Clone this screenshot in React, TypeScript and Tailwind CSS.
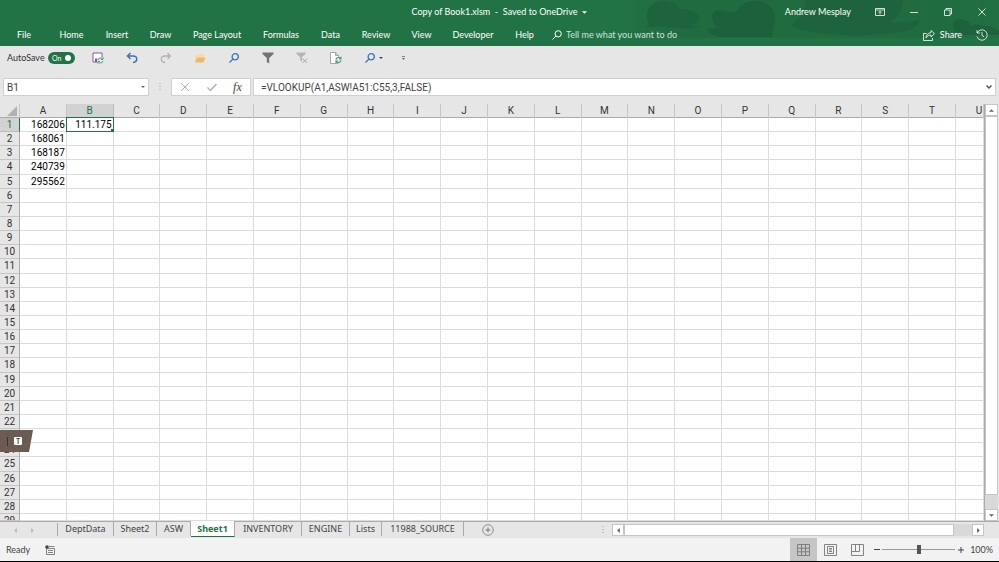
import React, { useState } from 'react';

const RIBBON_TABS = [
  { name: 'File', width: 'w-[48px]' },
  { name: 'Home', width: 'w-[47px]' },
  { name: 'Insert', width: 'w-[44px]' },
  { name: 'Draw', width: 'w-[43px]' },
  { name: 'Page Layout', width: 'w-[70px]' },
  { name: 'Formulas', width: 'w-[58px]' },
  { name: 'Data', width: 'w-[41px]' },
  { name: 'Review', width: 'w-[50px]' },
  { name: 'View', width: 'w-[41px]' },
  { name: 'Developer', width: 'w-[62px]' },
  { name: 'Help', width: 'w-[41px]' },
];

const SHEETS = [
  { name: 'DeptData', width: 'w-[56px]' },
  { name: 'Sheet2', width: 'w-[43px]' },
  { name: 'ASW', width: 'w-[34px]' },
  { name: 'Sheet1', width: 'w-[44px]' },
  { name: 'INVENTORY', width: 'w-[67px]' },
  { name: 'ENGINE', width: 'w-[48px]' },
  { name: 'Lists', width: 'w-[32px]' },
  { name: '11988_SOURCE', width: 'w-[82px]' },
];

const COLUMNS = 'ABCDEFGHIJKLMNOPQRSTU'.split('');
const ROWS = Array.from({ length: 29 }, (_, i) => i + 1);

const CELLS: Record<string, string> = {
  A1: '168206',
  B1: '111.175',
  A2: '168061',
  A3: '168187',
  A4: '240739',
  A5: '295562',
};

const ROW_GRID = 'grid grid-cols-[20px_repeat(20,minmax(0,5fr))_minmax(0,3fr)]';

function Triangle({ className, points }: { className: string; points: string }) {
  return (
    <svg viewBox="0 0 8 8" className={className} fill="currentColor" aria-hidden="true">
      <polygon points={points} />
    </svg>
  );
}

const DOWN = '0,2 8,2 4,6';
const UP = '0,6 8,6 4,2';
const LEFT = '6,0 6,8 2,4';
const RIGHT = '2,0 2,8 6,4';

function SearchIcon({ className }: { className: string }) {
  return (
    <svg viewBox="0 0 10 10" className={className} fill="none" stroke="currentColor" aria-hidden="true">
      <circle cx="6.2" cy="3.8" r="3.1" />
      <path d="M4 6 .5 9.500" />
    </svg>
  );
}

function HeaderArt() {
  return (
    <svg
      viewBox="0 0 380 38"
      className="absolute top-0 right-0 h-[38px] w-[380px]"
      fill="#1d613c"
      aria-hidden="true"
    >
      <linearGradient id="fade">
        <stop offset="0" stopColor="#20693f" stopOpacity="0" />
        <stop offset="0.15" stopColor="#20693f" stopOpacity="0.8" />
        <stop offset="0.8" stopColor="#20693f" stopOpacity="0.8" />
        <stop offset="1" stopColor="#20693f" stopOpacity="0.3" />
      </linearGradient>
      <rect width="380" height="38" fill="url(#fade)" />
      <path
        d="M28 16C28 6 36 1 44 1c9 0 16 4 18 9 4-2 9-1 11 2 5-1 8 3 7 7-1 5-5 7-10 7 6 1 10 0 12-1-4 4-14 4-22 3-12-1-22-2-33 0 0-2 2-3 3-4-1-3-2-5-2-8z"
        opacity="0.8"
      />
      <path d="M93 16c1-6 9-7 17-4 3 1 6 1 9-2 3-6 10-10 20-9 13 1 18 11 17 19-1 8-4 15-2 17h-51c-9 0-14-5-15-8 4 0 8-1 10-2-3-3-6-7-5-11z" />
      <path
        d="M186 0h98c-1 10-6 18-13 23 12 0 22-2 29-3 1 5-6 10-19 12-35 5-75 4-101-3-7-2-8-5-4-8 8-3 11-9 10-21z"
        opacity="0.8"
      />
      <path d="M335 30c-3-6 0-11 6-11 6 0 10 3 10 7 5-2 9-2 13 0 6-1 12 2 16 5v4h-34c-7-1-10-2-11-5z" opacity="0.9" />
    </svg>
  );
}

function Header() {
  return (
    <header className="relative h-[46px] shrink-0 bg-[#217346] text-[9px] text-white">
      <HeaderArt />
      <div className="relative flex h-6 items-center">
        <div className="flex flex-1 items-center justify-center gap-[5px]">
          <h1 className="whitespace-pre">Copy of Book1.xlsm  -  Saved to OneDrive</h1>
          <Triangle className="size-[5px]" points={DOWN} />
        </div>
        <div className="absolute right-0 flex items-center">
          <span className="mr-3">Andrew Mesplay</span>
          <button aria-label="Ribbon display options" className="grid h-6 w-[34px] place-items-center">
            <svg viewBox="0 0 10 8" className="h-2 w-[10px]" fill="none" stroke="currentColor" strokeWidth="0.8">
              <path d="M.5.5h9v7h-9zM.5 2h9M5 6.5v-3M3.500 4.700 5 3.200l1.500 1.500" />
            </svg>
          </button>
          <button aria-label="Minimize" className="grid h-6 w-[34px] place-items-center">
            <svg viewBox="0 0 8 8" className="size-2" stroke="currentColor" strokeWidth="0.8">
              <path d="M0 4.500h8" />
            </svg>
          </button>
          <button aria-label="Restore" className="grid h-6 w-[34px] place-items-center">
            <svg viewBox="0 0 8 8" className="size-2" fill="none" stroke="currentColor" strokeWidth="0.8">
              <path d="M.5 2h5.500v5.500H.5zM2 2V.5h5.500V6H6" />
            </svg>
          </button>
          <button aria-label="Close" className="grid h-6 w-[34px] place-items-center">
            <svg viewBox="0 0 8 8" className="size-2" stroke="currentColor" strokeWidth="0.8">
              <path d="m.5.5 7 7M7.500.5l-7 7" />
            </svg>
          </button>
        </div>
      </div>
      <nav className="relative flex h-[22px] items-center">
        {RIBBON_TABS.map((tab) => (
          <button key={tab.name} className={`${tab.width} h-full text-center whitespace-nowrap`}>
            {tab.name}
          </button>
        ))}
        <label className="ml-[7px] flex flex-1 items-center gap-1 text-[#cfe3d7]">
          <SearchIcon className="size-[10px] text-white" />
          <input
            aria-label="Tell me what you want to do"
            placeholder="Tell me what you want to do"
            className="w-40 bg-transparent outline-none placeholder:text-[#cfe3d7]"
          />
        </label>
        <button className="flex items-center gap-[5px]">
          <svg viewBox="0 0 12 11" className="h-[11px] w-3" fill="none" stroke="currentColor" strokeWidth="0.800">
            <path d="M3.500 3.500h-3v7h9V8M8 .5l3.500 3.200L8 7V5C5.500 5 4 6 3 8c0-3 2-5 5-5.500z" />
          </svg>
          Share
        </button>
        <button aria-label="Version history" className="mr-[11px] ml-[14px] grid place-items-center">
          <svg viewBox="0 0 12 12" className="size-3" fill="none" stroke="currentColor" strokeWidth="0.800">
            <path d="M1.200 4A5.200 5.200 0 1 1 1 7.500M1 1.200V4h3M6 3v3.300l2 1.500" />
          </svg>
        </button>
      </nav>
    </header>
  );
}

function ToolButton({ label, children }: { label: string; children: React.ReactNode }) {
  return (
    <button aria-label={label} className="grid h-6 w-[34px] place-items-center">
      {children}
    </button>
  );
}

function QuickAccess() {
  const [autoSave, setAutoSave] = useState(true);
  return (
    <div className="flex h-6 items-center pl-[7px] text-[9px]">
      <label className="mr-[6px] flex items-center">
        <span className="w-[41px] whitespace-nowrap">AutoSave</span>
        <span className="relative flex h-3 w-[27px] items-center rounded-full bg-[#217346] px-1 text-[7px] text-white">
          <input
            type="checkbox"
            checked={autoSave}
            onChange={(e) => setAutoSave(e.target.checked)}
            className="absolute inset-0 appearance-none"
          />
          <span className="flex-1">{autoSave ? 'On' : 'Off'}</span>
          <span className="size-[6px] rounded-full bg-white" />
        </span>
      </label>
      <ToolButton label="Save">
        <svg viewBox="0 0 12 12" className="size-3" fill="none">
          <path d="M1 1h9v9H1z" fill="#fff" stroke="#8a57a8" />
          <path d="M3 6.500h5V10H3z" fill="#8a57a8" />
          <circle cx="8.500" cy="8.500" r="3.500" fill="#e6e6e6" />
          <path d="M6 8a2.600 2.600 0 0 1 4.600-1M11 9a2.600 2.600 0 0 1-4.600 1M11 5.300V7.500H9M6 11.700V9.500h2" stroke="#55a07d" />
        </svg>
      </ToolButton>
      <ToolButton label="Undo">
        <svg viewBox="0 0 12 12" className="size-3" fill="none" stroke="#3a74b4" strokeWidth="1.500">
          <path d="M4.500 1 1.500 4l3 3M1.500 4H7c5 0 5 6 0 6.500" />
        </svg>
      </ToolButton>
      <ToolButton label="Redo">
        <svg viewBox="0 0 12 12" className="size-3" fill="none" stroke="#b1b1b1" strokeWidth="1.300">
          <path d="m7.500 1 3 3-3 3M10.500 4H5C0 4 0 10 5 10.500" />
        </svg>
      </ToolButton>
      <ToolButton label="Open">
        <svg viewBox="0 0 12 12" className="size-3">
          <path d="M1 10V3h3.500l1-1H10v3H3z" fill="#f7d9a4" />
          <path d="M1 10.500 3 5.500h8.500l-2 5z" fill="#edb968" />
        </svg>
      </ToolButton>
      <ToolButton label="Print preview">
        <SearchIcon className="size-[10px] stroke-[1.3] text-[#3a74b4]" />
      </ToolButton>
      <ToolButton label="Filter">
        <svg viewBox="0 0 12 12" className="size-3" fill="#737373">
          <path d="M.5.5h11v1.500L7.200 6v5.500l-2.400-1.500V6L.5 2z" />
        </svg>
      </ToolButton>
      <ToolButton label="Clear filter">
        <svg viewBox="0 0 12 12" className="size-3" fill="#b5b5b5">
          <path d="M.5.5h9V2L6 5v4.500L4.200 8.500V5L.5 2z" />
          <path d="m6.500 6.500 4.500 4.500M11 6.500 6.500 11" stroke="#a5a5a5" />
        </svg>
      </ToolButton>
      <ToolButton label="Refresh">
        <svg viewBox="0 0 12 12" className="size-3" fill="none">
          <path d="M.5.5h5l3 3v8h-8zM5.500.5v3h3" fill="#fff" stroke="#a5a5a5" />
          <circle cx="8.500" cy="8" r="3.500" fill="#e6e6e6" />
          <path
            d="M6 7.500a2.600 2.600 0 0 1 4.600-1M11 8.500a2.600 2.600 0 0 1-4.600 1M11 4.800V7H9M6 11.200V9h2"
            stroke="#55a07d"
            strokeWidth="1.200"
          />
        </svg>
      </ToolButton>
      <ToolButton label="Find">
        <SearchIcon className="size-[10px] stroke-[1.3] text-[#3a74b4]" />
      </ToolButton>
      <Triangle className="-ml-2 size-1 text-[#444]" points={DOWN} />
      <button aria-label="Customize toolbar" className="ml-[18px] text-[#666]">
        <svg viewBox="0 0 5 5" className="size-[5px]" fill="currentColor">
          <path d="M1 0h3v.8H1zM1 2h3L2.500 4z" />
        </svg>
      </button>
    </div>
  );
}

function FormulaBar() {
  return (
    <div className="flex h-[18px] items-stretch px-[3px] font-['Roboto',sans-serif] text-[10px] text-[#444] *:bg-white">
      <label className="flex w-[146px] items-center border border-[#d0d0d0] px-[3px]">
        <input aria-label="Name box" defaultValue="B1" className="min-w-0 flex-1 outline-none" />
        <Triangle className="size-1 text-[#666]" points={DOWN} />
      </label>
      <span className="grid w-[22px] place-items-center bg-transparent! text-[#999]">
        <svg viewBox="0 0 2 8" className="h-2 w-[2px]" fill="currentColor" aria-hidden="true">
          <path d="M.5 0h1v1h-1zM.5 3h1v1h-1zM.5 6h1v1h-1z" />
        </svg>
      </span>
      <div className="mr-[2px] flex w-20 items-center justify-around border border-[#d0d0d0] text-[#b0b0b0]">
        <button aria-label="Cancel">
          <svg viewBox="0 0 10 10" className="size-[10px]" stroke="currentColor">
            <path d="m1 1 8 8M9 1 1 9" />
          </svg>
        </button>
        <button aria-label="Enter">
          <svg viewBox="0 0 10 10" className="size-[10px]" fill="none" stroke="currentColor" strokeWidth="1.400">
            <path d="m.5 5.500 3 3L9.500 2" />
          </svg>
        </button>
        <button
          aria-label="Insert function"
          className="font-['Liberation_Serif',serif] text-[12px] leading-none text-[#444] italic"
        >
          fx
        </button>
      </div>
      <label className="flex flex-1 items-center border border-[#d0d0d0] pr-[3px] pl-[7px]">
        <input
          aria-label="Formula"
          defaultValue="=VLOOKUP(A1,ASW!A51:C55,3,FALSE)"
          className="min-w-0 flex-1 outline-none"
        />
        <svg viewBox="0 0 6 6" className="size-[6px]" fill="none" stroke="#555" strokeWidth="1.500" aria-hidden="true">
          <path d="m.5 1.500 2.500 2.500 2.500-2.500" />
        </svg>
      </label>
    </div>
  );
}

function Sheet() {
  return (
    <table className="flex min-w-0 flex-1 flex-col overflow-hidden border-r border-[#ababab] font-['Roboto',sans-serif] text-[10px] text-black">
      <thead className="block">
        <tr className={`${ROW_GRID} h-[14px] border-b border-[#ababab] bg-[#e6e6e6] leading-[14px]`}>
          <th aria-label="Select all" className="flex items-end justify-end border-r border-[#c6c6c6] p-[2px]">
            <svg viewBox="0 0 10 10" className="size-[10px]" fill="#b1b1b1">
              <path d="M10 0v10H0z" />
            </svg>
          </th>
          {COLUMNS.map((column) => (
            <th
              key={column}
              scope="col"
              className={`overflow-hidden border-r font-normal ${
                column === 'B' ? 'border-[#bcbcbc] bg-[#d2d2d2] text-[#217346]' : 'border-[#c6c6c6] text-[#333]'
              }`}
            >
              <span className={column === 'U' ? 'block w-[46px]' : 'block'}>{column}</span>
            </th>
          ))}
        </tr>
      </thead>
      <tbody className="grid min-h-0 flex-1 grid-rows-[repeat(28,minmax(0,2fr))_minmax(0,1fr)] bg-white">
        {ROWS.map((row) => (
          <tr key={row} className={`${ROW_GRID} min-h-0 leading-[14px]`}>
            <th
              scope="row"
              className={`overflow-hidden border-r border-b font-normal ${
                row === 1
                  ? 'border-r-[#217346] border-b-[#bcbcbc] bg-[#d2d2d2] text-[#217346]'
                  : 'border-r-[#ababab] border-b-[#c6c6c6] bg-[#e6e6e6] text-[#333]'
              }`}
            >
              {row}
            </th>
            {COLUMNS.map((column) => {
              const id = column + row;
              return (
                <td key={id} className="relative min-h-0 border-r border-b border-[#dcdcdc] pr-px text-right">
                  {CELLS[id]}
                  {id === 'B1' && (
                    <span className="absolute -inset-px z-10 border border-[#217346]">
                      <span className="absolute -right-px -bottom-px size-[3px] bg-[#217346]" />
                    </span>
                  )}
                </td>
              );
            })}
          </tr>
        ))}
      </tbody>
    </table>
  );
}

function VerticalScroll() {
  return (
    <div className="mr-px flex w-[13px] flex-col bg-[#d9d9d9] text-[#666] *:border *:border-[#c6c6c6] *:bg-white">
      <button aria-label="Scroll up" className="grid h-3 place-items-center">
        <Triangle className="size-[5px]" points={UP} />
      </button>
      <div className="flex-1" />
      <span className="h-[14px] border-0! bg-transparent!" />
      <button aria-label="Scroll down" className="grid h-3 place-items-center">
        <Triangle className="size-[5px]" points={DOWN} />
      </button>
    </div>
  );
}

function SheetTabs() {
  const [active, setActive] = useState('Sheet1');
  return (
    <div className="flex h-[17px] shrink-0 items-start border-t border-[#ababab] bg-[#e6e6e6] font-['Noto_Sans',sans-serif] text-[9px] text-[#444]">
      <div className="flex h-4 w-[57px] items-center gap-3 pl-[13px] text-[#b5b5b5]">
        <Triangle className="size-[5px]" points={LEFT} />
        <Triangle className="size-[5px]" points={RIGHT} />
      </div>
      <span className="mt-px h-[13px] w-px bg-[#ababab]" />
      {SHEETS.map((sheet) => (
        <button
          key={sheet.name}
          onClick={() => setActive(sheet.name)}
          className={`${sheet.width} border-r leading-[14px] whitespace-nowrap ${
            active === sheet.name
              ? '-mt-px h-4 border-b border-r-[#ababab] border-b-[#217346] bg-white font-bold text-[#217346]'
              : 'h-[14px] border-[#ababab]'
          }`}
        >
          {sheet.name}
        </button>
      ))}
      <button aria-label="New sheet" className="ml-[18px] grid h-4 place-items-center text-[#777]">
        <svg viewBox="0 0 12 12" className="size-3" fill="none" stroke="currentColor">
          <circle cx="6" cy="6" r="5.300" strokeWidth="0.800" />
          <path d="M3.500 6h5M6 3.500v5" />
        </svg>
      </button>
      <div className="ml-auto flex h-4 w-2/5 items-center pr-[15px] pl-[3px]">
        <svg viewBox="0 0 2 8" className="mr-2 h-2 w-[2px] shrink-0" fill="#999" aria-hidden="true">
          <path d="M.5 0h1v1h-1zM.5 3h1v1h-1zM.5 6h1v1h-1z" />
        </svg>
        <div className="flex h-3 flex-1 bg-[#d9d9d9] text-[#555] *:border *:border-[#c6c6c6] *:bg-white">
          <button aria-label="Scroll left" className="grid w-3 place-items-center">
            <Triangle className="size-[5px]" points={LEFT} />
          </button>
          <div className="flex-1" />
          <span className="w-[18px] border-0! bg-transparent!" />
          <button aria-label="Scroll right" className="grid w-3 place-items-center">
            <Triangle className="size-[5px]" points={RIGHT} />
          </button>
        </div>
      </div>
    </div>
  );
}

function StatusBar() {
  return (
    <footer className="flex h-6 shrink-0 items-center border-b border-black bg-[#f2f2f2] text-[9px] text-[#444]">
      <span className="w-[45px] pl-[6px]">Ready</span>
      <svg viewBox="0 0 10 10" className="size-[10px]" fill="none" stroke="#666" aria-hidden="true">
        <path d="M1.500 3.500h8v6h-8zM4 1.500h5.500M3 5.500h5M3 7.500h5" strokeWidth="0.800" />
        <circle cx="2" cy="2" r="1.800" fill="#444" stroke="none" />
      </svg>
      <div className="ml-auto flex h-full items-center">
        <button aria-label="Normal view" className="grid h-full w-[27px] place-items-center bg-[#c6c6c6]">
          <svg viewBox="0 0 13 12" className="h-3 w-[13px]" fill="none" stroke="#777" strokeWidth="0.900">
            <path d="M.5.5h12v11H.5zM.5 4.200h12M.5 7.800h12M4.500.5v11M8.500.5v11" />
          </svg>
        </button>
        <button aria-label="Page layout view" className="grid h-full w-[27px] place-items-center">
          <svg viewBox="0 0 13 12" className="h-3 w-[13px]" fill="none" stroke="#777" strokeWidth="0.900">
            <path d="M.5.5h12v11H.5zM3.500 2.500h6v7h-6zM5 4.500h3M5 6h3M5 7.500h3" />
          </svg>
        </button>
        <button aria-label="Page break preview" className="grid h-full w-[27px] place-items-center">
          <svg viewBox="0 0 13 12" className="h-3 w-[13px]" fill="none" stroke="#777" strokeWidth="0.900">
            <path d="M.5.5h12v11H.5zM.5 7.500h8v-7M4.500.5v7" />
          </svg>
        </button>
        <button aria-label="Zoom out" className="ml-px grid size-[10px] place-items-center">
          <span className="h-px w-[6px] bg-[#444]" />
        </button>
        <input
          type="range"
          aria-label="Zoom"
          defaultValue={50}
          className="h-[10px] w-[73px] appearance-none bg-[linear-gradient(#999,#999)] bg-[length:100%_1px] bg-center bg-no-repeat [&::-webkit-slider-thumb]:h-[9px] [&::-webkit-slider-thumb]:w-1 [&::-webkit-slider-thumb]:appearance-none [&::-webkit-slider-thumb]:bg-[#555]"
        />
        <button aria-label="Zoom in" className="ml-[2px] grid size-[8px] place-items-center">
          <svg viewBox="0 0 6 6" className="size-[6px]" stroke="#444">
            <path d="M0 3h6M3 0v6" />
          </svg>
        </button>
        <span className="w-[34px] pr-[6px] text-right">100%</span>
      </div>
    </footer>
  );
}

function TextBadge() {
  return (
    <div className="absolute top-[430px] left-0 flex h-[22px] w-[33px] items-center gap-[6px] bg-[#6b5b53] pl-[7px] [clip-path:polygon(0_0,100%_0,88%_100%,0_100%)]">
      <span className="h-[9px] w-px bg-[#3d322d]" />
      <span className="grid size-2 place-items-center rounded-[1px] bg-white text-[7px] leading-none font-bold text-[#444]">T</span>
    </div>
  );
}

export default function App() {
  return (
    <div className="relative flex h-screen flex-col overflow-hidden bg-[#e6e6e6] font-['Lato','Noto_Sans',sans-serif] text-[#333]">
      <Header />
      <QuickAccess />
      <div className="pt-2 pb-2">
        <FormulaBar />
      </div>
      <main className="flex min-h-0 flex-1">
        <Sheet />
        <VerticalScroll />
      </main>
      <SheetTabs />
      <StatusBar />
      <TextBadge />
    </div>
  );
}
